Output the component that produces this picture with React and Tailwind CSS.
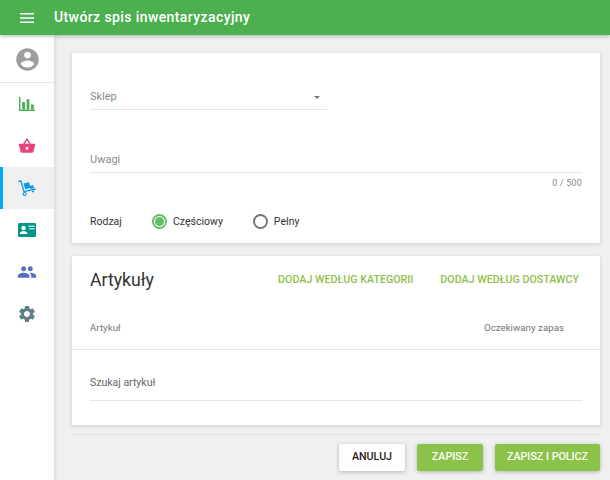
const Ic = ({ d, size, color }) => (
  <svg width={size} height={size} viewBox="0 0 24 24" fill={color}><path d={d} /></svg>
);

const Chart = () => (
  <svg width="16" height="14" viewBox="0 0 16 14" fill="#4caf50">
    <path d="M0 0h1.4v12.6H16V14H0z" />
    <path d="M3.2 5h2.8v7.6H3.2zM7.6 2.2h2.8v10.4H7.6zM12 7.5h2.8v5.1H12z" />
  </svg>
);

const Cart = () => (
  <svg width="18" height="16" viewBox="0 0 18 16" fill="none">
    <path d="M0.3 1.4L2.8 0.8l3.2 10.8L17.6 9" stroke="#039be5" strokeWidth="1.3" />
    <path d="M5.5 3.6l5.5-1.4 1.7 5.6-5.5 1.5z" fill="#039be5" />
    <path d="M11.5 6l3.6-.9.9 3-3.6.9z" fill="#039be5" />
    <circle cx="6.6" cy="14" r="1.5" stroke="#039be5" strokeWidth="1.1" />
    <circle cx="15" cy="11.6" r="1" fill="#039be5" />
  </svg>
);

const IdCard = () => (
  <svg width="18" height="14" viewBox="0 0 18 14">
    <rect width="18" height="14" rx="1.2" fill="#009688" />
    <circle cx="5.6" cy="5" r="2.2" fill="#fff" />
    <path d="M1.6 11c0-2 2.4-3 4-3s4 1 4 3z" fill="#fff" />
    <path d="M10.5 2.6h6v1.3h-6zM11 5.3h5.5v1.3H11z" fill="#c8ebe6" />
  </svg>
);

const icons = {
  basket: "M17.21 9l-4.38-6.56c-.19-.28-.51-.42-.83-.42-.32 0-.64.14-.83.43L6.79 9H2c-.55 0-1 .45-1 1 0 .09.01.18.04.27l2.54 9.27c.23.84 1 1.46 1.92 1.46h13c.92 0 1.69-.62 1.93-1.46l2.54-9.27L23 10c0-.55-.45-1-1-1h-4.79zM9 9l3-4.4L15 9H9zm3 8c-1.1 0-2-.9-2-2s.9-2 2-2 2 .9 2 2-.9 2-2 2z",
  people: "M16 11c1.66 0 2.99-1.34 2.99-3S17.66 5 16 5c-1.66 0-3 1.34-3 3s1.34 3 3 3zm-8 0c1.66 0 2.99-1.34 2.99-3S9.66 5 8 5C6.34 5 5 6.34 5 8s1.34 3 3 3zm0 2c-2.33 0-7 1.17-7 3.5V19h14v-2.5c0-2.33-4.67-3.5-7-3.5zm8 0c-.29 0-.62.02-.97.05 1.16.84 1.97 1.97 1.97 3.45V19h6v-2.5c0-2.33-4.67-3.5-7-3.5z",
  gear: "M19.14 12.94c.04-.3.06-.61.06-.94 0-.32-.02-.64-.07-.94l2.03-1.58c.18-.14.23-.41.12-.61l-1.92-3.32c-.12-.22-.37-.29-.59-.22l-2.39.96c-.5-.38-1.03-.7-1.62-.94l-.36-2.54c-.04-.24-.24-.41-.48-.41h-3.84c-.24 0-.43.17-.47.41l-.36 2.54c-.59.24-1.13.57-1.62.94l-2.39-.96c-.22-.08-.47 0-.59.22L2.74 8.87c-.12.21-.08.47.12.61l2.03 1.58c-.05.3-.09.63-.09.94s.02.64.07.94l-2.03 1.58c-.18.14-.23.41-.12.61l1.92 3.32c.12.22.37.29.59.22l2.39-.96c.5.38 1.03.7 1.62.94l.36 2.54c.05.24.24.41.48.41h3.84c.24 0 .44-.17.47-.41l.36-2.54c.59-.24 1.13-.56 1.62-.94l2.39.96c.22.08.47 0 .59-.22l1.92-3.32c.12-.22.07-.47-.12-.61l-2.01-1.58zM12 15.6c-1.98 0-3.6-1.62-3.6-3.6s1.62-3.6 3.6-3.6 3.6 1.62 3.6 3.6-1.62 3.6-3.6 3.6z",
  account: "M12 2C6.48 2 2 6.48 2 12s4.48 10 10 10 10-4.48 10-10S17.52 2 12 2zm0 3c1.66 0 3 1.34 3 3s-1.34 3-3 3-3-1.34-3-3 1.34-3 3-3zm0 14.2c-2.5 0-4.71-1.28-6-3.22.03-1.99 4-3.08 6-3.08 1.99 0 5.97 1.09 6 3.08-1.29 1.94-3.5 3.22-6 3.22z",
};

const Row = ({ active, children }) => (
  <div className={"h-[42px] flex items-center justify-center " + (active ? "bg-[#f0f0f0] border-l-[3px] border-[#03a9f4] pr-[3px]" : "")}>
    {children}
  </div>
);

const Radio = ({ on, label }) => (
  <div className="flex items-center gap-[6px]">
    <span className={"w-[15px] h-[15px] rounded-full border-2 flex items-center justify-center " + (on ? "border-[#66bb6a]" : "border-[#757575]")}>
      {on && <span className="w-[9px] h-[9px] rounded-full bg-[#66bb6a]" />}
    </span>
    <span className="text-[10.5px] text-[#333]">{label}</span>
  </div>
);

export default function App() {
  return (
    <div className="w-[610px] h-[480px] overflow-hidden flex flex-col bg-[#f0f0f0] font-['Roboto',sans-serif]">
      <header className="relative z-20 h-[35px] shrink-0 bg-[#4caf50] flex items-center pl-[20px] shadow-[0_1px_4px_rgba(0,0,0,0.3)]">
        <svg width="14" height="10" viewBox="0 0 14 10" fill="#fff"><path d="M0 0h14v1.4H0zM0 4.3h14v1.4H0zM0 8.6h14V10H0z" /></svg>
        <span className="ml-[20px] text-[14px] font-medium tracking-[0.4px] text-white">Utwórz spis inwentaryzacyjny</span>
      </header>
      <div className="flex flex-1 min-h-0">
        <aside className="relative z-10 w-[54px] shrink-0 bg-white shadow-[1px_0_4px_rgba(0,0,0,0.12)]">
          <div className="h-[48px] border-b border-[#e6e6e6] flex items-center justify-center pt-[1px] pl-[1px]">
            <Ic d={icons.account} size={27} color="#9e9e9e" />
          </div>
          <Row><Chart /></Row>
          <Row><Ic d={icons.basket} size={18} color="#ec407a" /></Row>
          <Row active><Cart /></Row>
          <Row><IdCard /></Row>
          <Row><Ic d={icons.people} size={20} color="#5c6bc0" /></Row>
          <Row><Ic d={icons.gear} size={20} color="#607d8b" /></Row>
        </aside>
        <main className="flex-1 pl-[18px] pr-[10px] pt-[18px]">
          <section className="h-[190px] bg-white shadow-[0_1px_4px_rgba(0,0,0,0.16)] px-[18px] pt-[31px]">
            <div className="w-[237px] h-[26px] pt-[1px] border-b border-[#e6e6e6] flex items-center justify-between pr-[7px]">
              <span className="text-[11px] text-[#8a8a8a]">Sklep</span>
              <span className="w-0 h-0 border-x-[3.5px] border-x-transparent border-t-[3.5px] border-t-[#757575]" />
            </div>
            <div className="mt-[38px] h-[25px] pt-[1px] border-b border-[#e6e6e6] flex items-center">
              <span className="text-[11px] text-[#8a8a8a]">Uwagi</span>
            </div>
            <div className="mt-[2px] text-right text-[9px] leading-[16px] text-[#8a8a8a] tracking-[0.2px]">0 / 500</div>
            <div className="mt-[23px] flex items-center">
              <span className="w-[62px] text-[10.5px] text-[#333]">Rodzaj</span>
              <Radio on label="Częściowy" />
              <div className="w-[30px]" />
              <Radio label="Pełny" />
            </div>
          </section>
          <section className="mt-[13px] h-[169px] bg-white shadow-[0_1px_4px_rgba(0,0,0,0.16)]">
            <div className="h-[48px] pl-[18px] pr-[21px] flex items-center justify-between">
              <span className="text-[17.7px] text-[#333]">Artykuły</span>
              <div className="flex gap-[27px] text-[10.7px] font-medium text-[#8bc34a]">
                <span>DODAJ WEDŁUG KATEGORII</span>
                <span>DODAJ WEDŁUG DOSTAWCY</span>
              </div>
            </div>
            <div className="h-[46px] pl-[18px] pr-[36px] pt-[4px] border-b border-[#e6e6e6] flex items-center justify-between text-[9.75px] text-[#757575]">
              <span>Artykuł</span>
              <span>Oczekiwany zapas</span>
            </div>
            <div className="mx-[18px] mt-[19px] h-[32px] pb-[3px] border-b border-[#e6e6e6] flex items-center text-[10.5px] text-[#666]">
              Szukaj artykuł
            </div>
          </section>
          <div className="mt-[9px] border-t border-[#e0e0e0] pt-[9px] flex justify-end gap-[12px] text-[10.7px] font-medium">
            <button className="w-[66px] h-[27px] rounded-[2px] bg-white text-[#222] shadow-[0_1px_4px_rgba(0,0,0,0.25)]">ANULUJ</button>
            <button className="w-[66px] h-[27px] rounded-[2px] bg-[#8bc34a] text-white shadow-[0_1px_4px_rgba(0,0,0,0.25)]">ZAPISZ</button>
            <button className="w-[105px] h-[27px] rounded-[2px] bg-[#8bc34a] text-white shadow-[0_1px_4px_rgba(0,0,0,0.25)]">ZAPISZ I POLICZ</button>
          </div>
        </main>
      </div>
    </div>
  );
}
